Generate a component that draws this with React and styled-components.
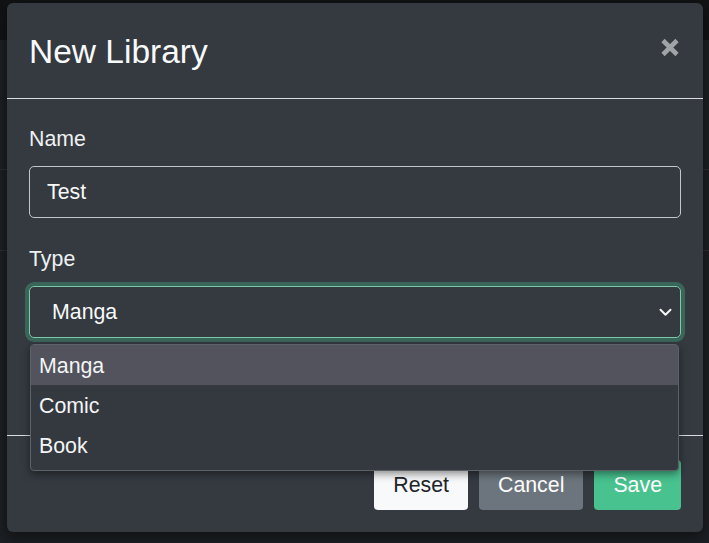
import React from "react";
import styled, { createGlobalStyle } from "styled-components";

const Global = createGlobalStyle`
  html, body { margin: 0; padding: 0; }
  body {
    width: 709px;
    height: 543px;
    overflow: hidden;
    font-family: "Liberation Sans", Arial, sans-serif;
    background:
      linear-gradient(to bottom, transparent 169px, #2a2e33 169px, #2a2e33 170px, transparent 170px),
      linear-gradient(to bottom, transparent 250px, #2a2e33 250px, #2a2e33 251px, transparent 251px),
      linear-gradient(to bottom, #111315 0, #111315 40px, #1c1f23 40px);
  }
  * { box-sizing: border-box; }
`;

const Page = styled.div`
  padding: 3px 6px 0 7px;
`;

const Modal = styled.div`
  width: 696px;
  background: #343a40;
  border-radius: 6px;
  color: #f1f3f5;
  box-shadow: 0 4px 14px rgba(0, 0, 0, 0.5);
`;

const Header = styled.div`
  display: flex;
  align-items: center;
  justify-content: space-between;
  height: 96px;
  padding: 0 23px 0 22px;
  border-bottom: 1px solid #d9dcdf;
`;

const Title = styled.h5`
  margin: 2px 0 0 0;
  font-size: 33.5px;
  font-weight: 400;
  line-height: 48px;
  color: #f8f9fa;
`;

const Close = styled.button`
  display: flex;
  padding: 0;
  margin: 0 0 7px 0;
  border: 0;
  background: transparent;
  cursor: pointer;
`;

const Body = styled.div`
  padding: 24px 22px 97px 22px;
`;

const Group = styled.div`
  position: relative;
  & + & { margin-top: 25px; }
`;

const Label = styled.label`
  display: block;
  font-size: 21.33px;
  line-height: 32px;
  margin-bottom: 11px;
  color: #eef0f2;
`;

const Input = styled.div`
  height: 52px;
  display: flex;
  align-items: center;
  padding: 0 17px;
  border: 1px solid #c2c6ca;
  border-radius: 5px;
  font-size: 21.33px;
  color: #f8f9fa;
`;

const SelectFace = styled.div`
  height: 52px;
  display: flex;
  align-items: center;
  justify-content: space-between;
  padding: 0 8px 0 22px;
  border: 1px solid #7cc8a8;
  border-radius: 5px;
  box-shadow: 0 0 0 4px rgba(72, 195, 144, 0.33);
  font-size: 21.33px;
  color: #f8f9fa;
`;

const Menu = styled.ul`
  position: absolute;
  left: 1px;
  top: calc(100% + 6px);
  width: 649px;
  margin: 0;
  padding: 0 0 5px 0;
  list-style: none;
  background: #343940;
  border: 1px solid #5d6168;
  border-radius: 4px;
  box-shadow: 0 3px 8px rgba(0, 0, 0, 0.45);
  z-index: 10;
`;

const Option = styled.li`
  height: 40px;
  display: flex;
  align-items: center;
  padding: 2px 8px 0 8px;
  font-size: 21.33px;
  color: #f4f5f6;
  background: ${(p) => (p.$active ? "#53535d" : "transparent")};
`;

const Footer = styled.div`
  display: flex;
  justify-content: flex-end;
  gap: 11px;
  padding: 24px 22px 22px 22px;
  border-top: 1px solid #d9dcdf;
`;

const variants = {
  light: { bg: "#f8f9fa", fg: "#212529" },
  secondary: { bg: "#6c757d", fg: "#ffffff" },
  success: { bg: "#48c28f", fg: "#ffffff" },
};

const Button = styled.button`
  height: 50px;
  padding: 0 19px;
  border: 0;
  border-radius: 4px;
  font-family: "Liberation Sans", Arial, sans-serif;
  font-size: 21.33px;
  background: ${(p) => variants[p.$variant].bg};
  color: ${(p) => variants[p.$variant].fg};
  cursor: pointer;
`;

const CloseIcon = () => (
  <svg width="20" height="19" viewBox="0 0 20 19">
    <path
      d="M3 2.5 L17 16.5 M17 2.5 L3 16.5"
      stroke="#a1a4a7"
      strokeWidth="4.6"
      strokeLinecap="butt"
      fill="none"
    />
  </svg>
);

const Chevron = () => (
  <svg width="13" height="9" viewBox="0 0 13 9">
    <path d="M1.5 1.8 L6.5 6.8 L11.5 1.8" stroke="#f4f5f6" strokeWidth="2" fill="none" strokeLinecap="round" strokeLinejoin="round" />
  </svg>
);

export default function App() {
  const options = ["Manga", "Comic", "Book"];
  return (
    <>
      <Global />
      <Page>
        <Modal>
          <Header>
            <Title>New Library</Title>
            <Close aria-label="Close">
              <CloseIcon />
            </Close>
          </Header>
          <Body>
            <Group>
              <Label>Name</Label>
              <Input>Test</Input>
            </Group>
            <Group>
              <Label>Type</Label>
              <SelectFace>
                <span>Manga</span>
                <Chevron />
              </SelectFace>
              <Menu>
                {options.map((o, i) => (
                  <Option key={o} $active={i === 0}>
                    {o}
                  </Option>
                ))}
              </Menu>
            </Group>
          </Body>
          <Footer>
            <Button $variant="light">Reset</Button>
            <Button $variant="secondary">Cancel</Button>
            <Button $variant="success">Save</Button>
          </Footer>
        </Modal>
      </Page>
    </>
  );
}
